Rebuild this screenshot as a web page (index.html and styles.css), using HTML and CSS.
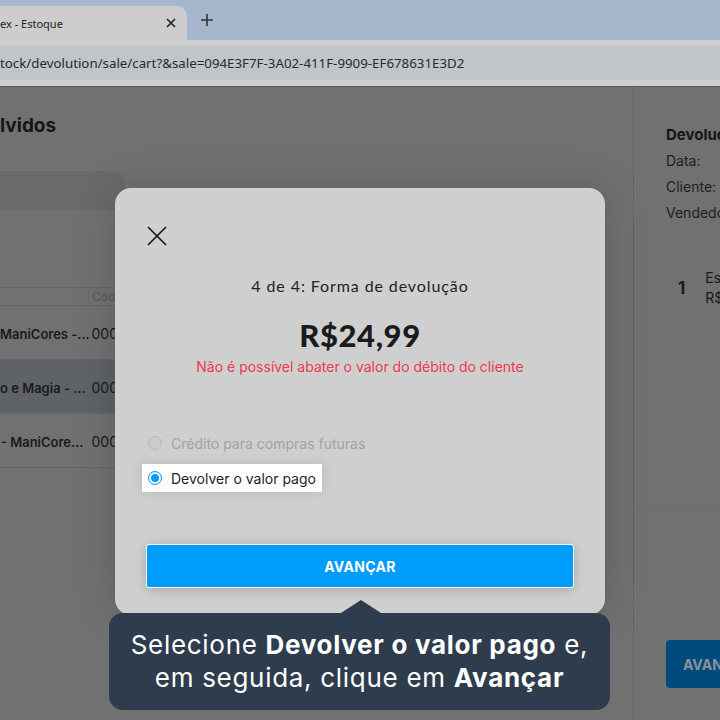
FILE: index.html
```html
<!DOCTYPE html>
<html lang="pt-BR">
<head>
    <meta charset="UTF-8">
    <meta name="viewport" content="width=device-width, initial-scale=1.0">
    <title>Estoque - Devolução</title>
    <link rel="stylesheet" href="styles.css">
</head>
<body>
    <div class="chrome">
        <div class="tabs">
            <div class="tab">
                <span class="tab-title">ex - Estoque</span>
                <svg class="tab-close" width="12" height="12" viewBox="0 0 12 12"><path d="M2 2L10 10M10 2L2 10" stroke="#222" stroke-width="1.6"/></svg>
            </div>
            <svg class="tab-new" width="14" height="14" viewBox="0 0 14 14"><path d="M7 1V13M1 7H13" stroke="#333" stroke-width="1.6"/></svg>
        </div>
        <div class="toolbar">
            <div class="url">tock/devolution/sale/cart?&amp;sale=094E3F7F-3A02-411F-9909-EF678631E3D2</div>
        </div>
    </div>

    <div class="page">
        <main class="content">
            <h1>lvidos</h1>
            <div class="search-card"></div>
            <table class="items">
                <thead>
                    <tr>
                        <th class="col-name"></th>
                        <th>Código</th>
                    </tr>
                </thead>
                <tbody>
                    <tr>
                        <td class="col-name">ManiCores -...</td>
                        <td>0001</td>
                    </tr>
                    <tr class="selected">
                        <td class="col-name">o e Magia - ...</td>
                        <td>0002</td>
                    </tr>
                    <tr>
                        <td class="col-name">- ManiCore...</td>
                        <td>0003</td>
                    </tr>
                </tbody>
            </table>
        </main>

        <aside class="summary">
            <h2>Devolução</h2>
            <p>Data:</p>
            <p>Cliente:</p>
            <p>Vendedor:</p>
            <div class="sum-item">
                <span class="qty">1</span>
                <div class="sum-desc">
                    <span>Esmalte</span>
                    <span>R$24,99</span>
                </div>
            </div>
            <div class="sum-footer">
                <button class="sum-btn">AVANÇAR</button>
            </div>
        </aside>

        <div class="modal">
            <svg class="modal-close" width="22" height="22" viewBox="0 0 22 22"><path d="M2 2L20 20M20 2L2 20" stroke="#111" stroke-width="1.6"/></svg>
            <div class="step">4 de 4: Forma de devolução</div>
            <div class="price">R$24,99</div>
            <div class="warn">Não é possível abater o valor do débito do cliente</div>

            <div class="options">
                <label class="option disabled">
                    <span class="radio"></span>
                    Crédito para compras futuras
                </label>
                <label class="option active">
                    <span class="radio checked"></span>
                    Devolver o valor pago
                </label>
            </div>

            <button class="next">AVANÇAR</button>
        </div>

        <div class="tip">
            Selecione <b>Devolver o valor pago</b> e,<br>
            em seguida, clique em <b>Avançar</b>
        </div>
    </div>
</body>
</html>
```

FILE: styles.css
```css
body {
    margin: 0;
    width: 720px;
    height: 720px;
    overflow: hidden;
    font-family: 'Inter', 'Noto Sans', sans-serif;
    background-color: #717171;
    color: #1a1a1a;
}

/* browser */
.chrome {
    font-family: 'Noto Sans', 'Open Sans', sans-serif;
}
.tabs {
    height: 40px;
    padding-top: 6px;
    box-sizing: border-box;
    background-color: #a6b7cd;
    display: flex;
    align-items: stretch;
}
.tab {
    width: 187px;
    background-color: #cdcdcd;
    border-radius: 0 10px 0 0;
    display: flex;
    align-items: center;
    justify-content: space-between;
    padding-right: 10px;
    box-sizing: border-box;
    font-size: 11px;
    color: #222;
}
.tab-new {
    margin: 7px 0 0 13px;
}
.toolbar {
    height: 47px;
    background-color: #cdcdcd;
    padding-top: 6px;
    box-sizing: border-box;
    border-bottom: 1px solid #5b5b5b;
}
.url {
    height: 34px;
    background-color: #c1c4c9;
    font-size: 13.3px;
    line-height: 34px;
    color: #2a2a2a;
    white-space: nowrap;
}

/* page */
.page {
    position: relative;
    height: 633px;
    display: flex;
}
.content {
    width: 633px;
    border-right: 1px solid #646464;
    flex-shrink: 0;
}
h1 {
    font-size: 19px;
    line-height: 24px;
    margin: 27px 0 33px;
    color: #161616;
}
.search-card {
    width: 125px;
    height: 39px;
    background-color: #6a6a6a;
    border-radius: 0 14px 14px 0;
    margin-bottom: 77px;
}
.items {
    border-collapse: collapse;
    table-layout: fixed;
    width: 240px;
    font-size: 14px;
}
.items th {
    height: 17px;
    padding: 0 3px;
    font-weight: normal;
    font-size: 12px;
    color: #585858;
    text-align: left;
    border-top: 1px solid #656565;
    border-bottom: 1px solid #656565;
}
.items th.col-name {
    border-right: 1px solid #656565;
}
.items td {
    height: 51px;
    padding: 2px 3px 0;
    border-bottom: 1px solid #656565;
    white-space: nowrap;
    overflow: hidden;
}
.items .col-name {
    width: 83px;
    text-align: right;
    font-weight: 600;
    font-size: 13px;
    padding-right: 5px;
    padding-left: 0;
}
.items .selected td {
    background-color: #5f6367;
}

/* resumo */
.summary {
    flex: 1;
    padding: 38px 0 32px 32px;
    display: flex;
    flex-direction: column;
    font-size: 14px;
    white-space: nowrap;
    overflow: hidden;
}
.summary h2 {
    font-size: 15px;
    line-height: 20px;
    margin: 0 0 3px;
    color: #161616;
}
.summary p {
    margin: 0;
    line-height: 26px;
    color: #1e1e1e;
}
.sum-item {
    display: flex;
    align-items: center;
    gap: 20px;
    margin: 42px 0 0 12px;
}
.qty {
    font-weight: bold;
    font-size: 17px;
}
.sum-desc {
    display: flex;
    flex-direction: column;
    line-height: 20px;
}
.sum-footer {
    margin: auto 0 0 -32px;
    padding: 134px 0 0 32px;
    border-top: 1px solid #6c6c6c;
}
.sum-btn {
    background-color: #004a7c;
    color: #8a939b;
    border: none;
    border-radius: 4px;
    height: 48px;
    width: 140px;
    padding: 0 17px;
    text-align: left;
    font-family: inherit;
    font-weight: bold;
    font-size: 14px;
}

/* modal */
.modal {
    position: absolute;
    left: 115px;
    top: 101px;
    width: 490px;
    height: 427px;
    box-sizing: border-box;
    padding: 37px 31px 0;
    background-color: #cfcfcf;
    border-radius: 16px;
    box-shadow: 0 0 40px rgba(0,0,0,0.18);
    display: flex;
    flex-direction: column;
    align-items: center;
}
.modal-close {
    align-self: flex-start;
}
.step {
    margin-top: 29px;
    font-family: 'Lato', sans-serif;
    font-size: 16px;
    letter-spacing: 0.9px;
    line-height: 20px;
    color: #222;
}
.price {
    margin-top: 22px;
    font-family: 'Lato', sans-serif;
    font-weight: 900;
    font-size: 31px;
    letter-spacing: 0.6px;
    line-height: 34px;
    color: #1b1b1b;
}
.warn {
    margin-top: 5px;
    font-size: 14px;
    line-height: 20px;
    color: #ec3a50;
}
.options {
    align-self: stretch;
    margin-top: 52px;
    display: flex;
    flex-direction: column;
    align-items: flex-start;
    gap: 7px;
    margin-left: -4px;
}
.option {
    height: 28px;
    display: flex;
    align-items: center;
    gap: 9px;
    padding: 0 6px;
    font-size: 14px;
}
.option.disabled {
    color: #a2a2a2;
}
.option.active {
    background-color: white;
    color: #1e1e1e;
    box-shadow: 0 0 12px rgba(0,0,0,0.12);
}
.radio {
    width: 14px;
    height: 14px;
    box-sizing: border-box;
    border-radius: 50%;
    border: 1px solid #b6b6b6;
    background-color: #cbcbcb;
}
.radio.checked {
    border: 1.5px solid #0a9cf4;
    background-color: white;
    box-shadow: inset 0 0 0 2px white, inset 0 0 0 6px #0a9cf4;
}
.next {
    align-self: stretch;
    margin-top: 52px;
    height: 44px;
    background-color: #009cfa;
    color: white;
    border: 1px solid white;
    border-radius: 3px;
    font-family: inherit;
    font-weight: bold;
    font-size: 14px;
    letter-spacing: 0.3px;
    box-shadow: 0 2px 12px rgba(0,0,0,0.2);
}

/* dica */
.tip {
    position: absolute;
    left: 109px;
    top: 526px;
    width: 501px;
    height: 97px;
    box-sizing: border-box;
    padding-top: 15px;
    background-color: #2e3c4d;
    border-radius: 14px;
    color: white;
    font-size: 26px;
    letter-spacing: 0.7px;
    line-height: 33px;
    text-align: center;
}
.tip::before {
    content: '';
    position: absolute;
    left: 232px;
    top: -13px;
    border-left: 20px solid transparent;
    border-right: 20px solid transparent;
    border-bottom: 13px solid #2e3c4d;
}
.tip b {
    font-weight: 700;
}
```
